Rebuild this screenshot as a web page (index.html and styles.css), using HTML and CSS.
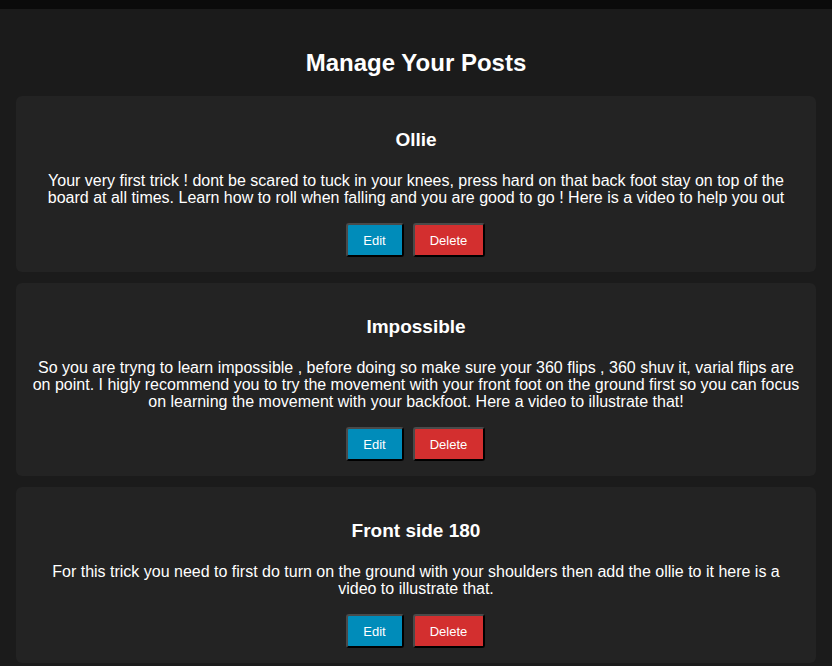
FILE: index.html
```html
<!DOCTYPE html>
<html lang="en">
<head>
<meta charset="utf-8">
<title>Manage Your Posts</title>
<link rel="stylesheet" href="styles.css">
</head>
<body>
<div class="topbar"></div>
<main class="page">
  <h1 class="page-title">Manage Your Posts</h1>
  <div class="posts">
    <section class="post">
      <h2 class="post-title">Ollie</h2>
      <p class="post-text">Your very first trick ! dont be scared to tuck in your knees, press hard on that back foot stay on top of the board at all times. Learn how to roll when falling and you are good to go ! Here is a video to help you out</p>
      <div class="actions">
        <button class="btn btn-edit">Edit</button>
        <button class="btn btn-delete">Delete</button>
      </div>
    </section>
    <section class="post">
      <h2 class="post-title">Impossible</h2>
      <p class="post-text">So you are tryng to learn impossible , before doing so make sure your 360 flips , 360 shuv it, varial flips are on point. I higly recommend you to try the movement with your front foot on the ground first so you can focus on learning the movement with your backfoot. Here a video to illustrate that!</p>
      <div class="actions">
        <button class="btn btn-edit">Edit</button>
        <button class="btn btn-delete">Delete</button>
      </div>
    </section>
    <section class="post">
      <h2 class="post-title">Front side 180</h2>
      <p class="post-text">For this trick you need to first do turn on the ground with your shoulders then add the ollie to it here is a video to illustrate that.</p>
      <div class="actions">
        <button class="btn btn-edit">Edit</button>
        <button class="btn btn-delete">Delete</button>
      </div>
    </section>
  </div>
</main>
</body>
</html>
```

FILE: styles.css
```css
html, body {
  margin: 0;
  padding: 0;
  background: #1b1b1b;
  color: #ffffff;
  font-family: "Liberation Sans", Arial, sans-serif;
}

.topbar {
  height: 9px;
  background: #0b0b0b;
}

.page {
  padding: 40px 16px 0;
}

.page-title {
  margin: 0 0 19px;
  font-size: 24px;
  line-height: 28px;
  font-weight: bold;
  text-align: center;
}

.posts {
  display: flex;
  flex-direction: column;
  gap: 11px;
}

.post {
  background: #232323;
  border-radius: 6px;
  padding: 32px 16px 15px;
  text-align: center;
}

.post-title {
  margin: 0 0 20px;
  font-size: 19px;
  line-height: 24px;
  font-weight: bold;
}

.post-text {
  margin: 0 0 17px;
  font-size: 16px;
  line-height: 17px;
}

.actions {
  display: flex;
  justify-content: center;
  gap: 9px;
}

.btn {
  height: 34px;
  padding: 0 14px;
  font-family: "Liberation Sans", Arial, sans-serif;
  font-size: 13px;
  color: #ffffff;
  border: 2px solid #4a4a4a;
  border-right-color: #000;
  border-bottom-color: #000;
  border-radius: 3px;
}

.btn-edit {
  background: #008cba;
  width: 58px;
  margin-left: -2px;
}

.btn-delete {
  background: #d32f2f;
  width: 72px;
}
```
